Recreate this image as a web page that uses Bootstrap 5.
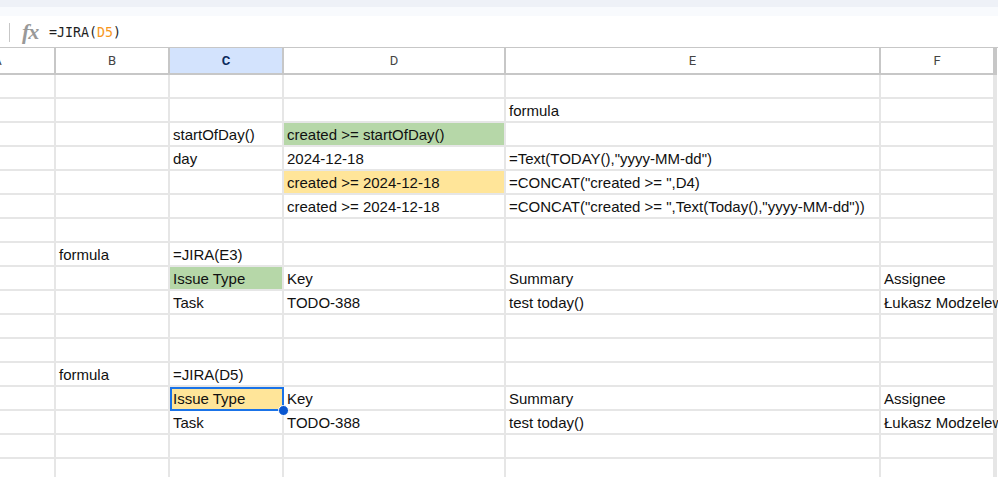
<!DOCTYPE html>
<html lang="en">
<head>
<meta charset="utf-8">
<title>Sheet</title>
<link href="https://cdn.jsdelivr.net/npm/bootstrap@5.3.0/dist/css/bootstrap.min.css" rel="stylesheet">
<style>
html, body { height: 100%; overflow: hidden; background: #fff; }
.app-strip { height: 7px; background: #eef1f7; }
.tool-strip { height: 9px; background: #f8fafd; }
.fx-bar { height: 32px; padding-left: 9px; padding-top: 1px; border-bottom: 1px solid #c7c7c7; }
.fx-sep { width: 1px; height: 19px; background: #c7c7c7; }
.fx-mark { width: 39px; padding-left: 12px; font: italic 700 22px/1 "Liberation Serif", serif; color: #999; letter-spacing: -1px; }
.fx-text { font: 13.3px "DejaVu Sans Mono", monospace; color: #1f1f1f; }
.fx-ref { color: #f7981d; }
.sheet-clip { overflow: hidden; }
.sheet-grid.table { table-layout: fixed; width: 1052px; margin-left: -59px; border-collapse: separate; border-spacing: 0; }
.sheet-grid.table > * > * > * {
  height: 24px; padding: 0 3px 1px 3px; vertical-align: bottom; white-space: nowrap; overflow: hidden;
  font: 15px/1.2 "Liberation Sans", Arial, sans-serif; color: #111;
  border-right: 2px solid #e6e6e6; border-bottom: 2px solid #e6e6e6; background: #fff; box-shadow: none;
}
.sheet-grid.table > thead > * > * {
  height: 27px; padding: 0 0 1px; text-align: center; vertical-align: middle; font: 13px Roboto, sans-serif; color: #444;
  border-right: 2px solid #c7c7c7; border-bottom: 2px solid #c7c7c7;
}
.sheet-grid.table > thead > * > .col-on { background: #d3e3fd; color: #0b2a5c; font-weight: 700; }
.sheet-grid.table > tbody > * > .fill-green { background: #b6d7a8; }
.sheet-grid.table > tbody > * > .fill-amber { background: #ffe599; }
.sheet-grid.table > tbody > * > .cell-on { position: relative; overflow: visible; outline: 2px solid #1a73e8; outline-offset: -2px; }
.sheet-grid.table > tbody > * > .cell-spill { overflow: visible; }
.fill-dot { position: absolute; right: -7px; bottom: -7px; width: 11px; height: 11px; border-radius: 50%; background: #0b57d0; border: 1px solid #fff; z-index: 2; }
.c-a { width: 115px; } .c-b { width: 114px; } .c-c { width: 114px; } .c-d { width: 222px; } .c-e { width: 375px; } .c-f { width: 114px; } .c-g { width: 2px; }
</style>
</head>
<body>
<div class="app-strip"></div>
<div class="tool-strip"></div>
<div class="fx-bar d-flex align-items-center">
  <div class="fx-sep"></div>
  <div class="fx-mark">fx</div>
  <div class="fx-text">=JIRA(<span class="fx-ref">D5</span>)</div>
</div>
<div class="sheet-clip">
<table class="table mb-0 sheet-grid">
<colgroup><col class="c-a"><col class="c-b"><col class="c-c"><col class="c-d"><col class="c-e"><col class="c-f"><col class="c-g"></colgroup>
<thead><tr><th>A</th><th>B</th><th class="col-on">C</th><th>D</th><th>E</th><th>F</th><th></th></tr></thead>
<tbody>
<tr><td></td><td></td><td></td><td></td><td></td><td></td><td></td></tr>
<tr><td></td><td></td><td></td><td></td><td>formula</td><td></td><td></td></tr>
<tr><td></td><td></td><td>startOfDay()</td><td class="fill-green">created &gt;= startOfDay()</td><td></td><td></td><td></td></tr>
<tr><td></td><td></td><td>day</td><td>2024-12-18</td><td>=Text(TODAY(),"yyyy-MM-dd")</td><td></td><td></td></tr>
<tr><td></td><td></td><td></td><td class="fill-amber">created &gt;= 2024-12-18</td><td>=CONCAT("created &gt;= ",D4)</td><td></td><td></td></tr>
<tr><td></td><td></td><td></td><td>created &gt;= 2024-12-18</td><td>=CONCAT("created &gt;= ",Text(Today(),"yyyy-MM-dd"))</td><td></td><td></td></tr>
<tr><td></td><td></td><td></td><td></td><td></td><td></td><td></td></tr>
<tr><td></td><td>formula</td><td>=JIRA(E3)</td><td></td><td></td><td></td><td></td></tr>
<tr><td></td><td></td><td class="fill-green">Issue Type</td><td>Key</td><td>Summary</td><td>Assignee</td><td></td></tr>
<tr><td></td><td></td><td>Task</td><td>TODO-388</td><td>test today()</td><td class="cell-spill">Łukasz Modzelewski</td><td></td></tr>
<tr><td></td><td></td><td></td><td></td><td></td><td></td><td></td></tr>
<tr><td></td><td></td><td></td><td></td><td></td><td></td><td></td></tr>
<tr><td></td><td>formula</td><td>=JIRA(D5)</td><td></td><td></td><td></td><td></td></tr>
<tr><td></td><td></td><td class="fill-amber cell-on">Issue Type<span class="fill-dot"></span></td><td>Key</td><td>Summary</td><td>Assignee</td><td></td></tr>
<tr><td></td><td></td><td>Task</td><td>TODO-388</td><td>test today()</td><td class="cell-spill">Łukasz Modzelewski</td><td></td></tr>
<tr><td></td><td></td><td></td><td></td><td></td><td></td><td></td></tr>
<tr><td></td><td></td><td></td><td></td><td></td><td></td><td></td></tr>
</tbody>
</table>
</div>
</body>
</html>
